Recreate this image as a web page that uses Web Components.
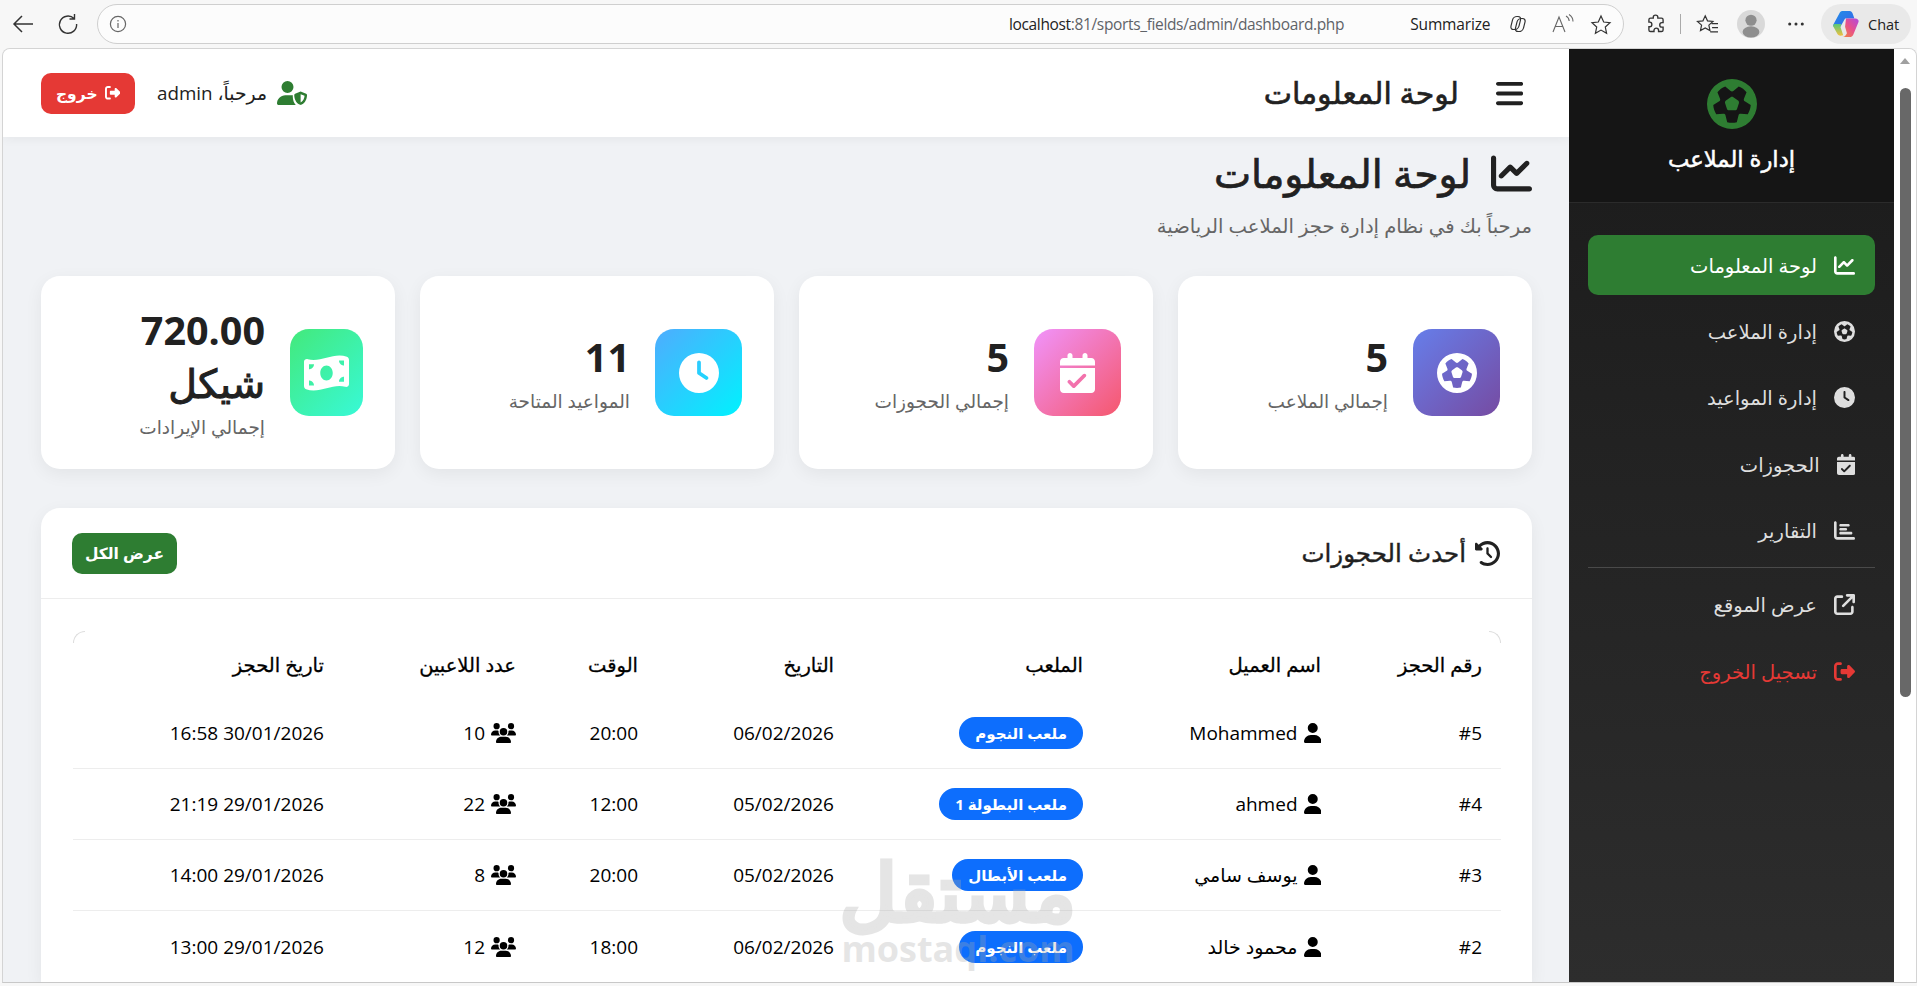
<!DOCTYPE html>
<html lang="ar" dir="rtl">
<head>
<meta charset="utf-8">
<title>لوحة المعلومات</title>
<style>
  html, body { margin: 0; height: 100%; overflow: hidden; background: #f7f7f7; }
  body {
    width: 1917px;
    height: 986px;
    font-family: "Open Sans", "DejaVu Sans", sans-serif;
    color: #212121;
    display: flex;
    flex-direction: column;
  }
  .frame {
    display: flex;
    height: 933px;
    margin-left: 2px;
    overflow: hidden;
    background: #f0f2f5;
    border-top: 1px solid #d4d4d4;
    border-left: 1px solid #d4d4d4;
    border-bottom: 1px solid #c8c8c8;
    border-right: 1px solid #d4d4d4;
    border-top-left-radius: 8px;
    border-top-right-radius: 8px;
    box-sizing: content-box;
    position: relative;
  }
</style>
</head>
<body>
  <browser-bar url-host="localhost" url-rest=":81/sports_fields/admin/dashboard.php"></browser-bar>
  <div class="frame">
    <fake-scrollbar></fake-scrollbar>
    <app-sidebar></app-sidebar>
    <dashboard-main></dashboard-main>
  </div>

<script>
// FontAwesome style glyphs used across the page
const ICONS = {
  chart: ['0 0 512 512', 'M64 64c0-17.7-14.3-32-32-32S0 46.3 0 64V400c0 44.2 35.8 80 80 80H480c17.7 0 32-14.3 32-32s-14.3-32-32-32H80c-8.8 0-16-7.2-16-16V64zm406.6 86.6c12.5-12.5 12.5-32.8 0-45.3s-32.8-12.5-45.3 0L320 210.7l-57.4-57.4c-12.5-12.5-32.8-12.5-45.3 0l-112 112c-12.5 12.5-12.5 32.8 0 45.3s32.8 12.5 45.3 0L240 221.3l57.4 57.4c12.5 12.5 32.8 12.5 45.3 0l128-128z'],
  futbol: ['0 0 512 512', 'M417.3 360.1l-71.6-4.8c-5.2-.3-10.3 1.1-14.5 4.2s-7.2 7.4-8.4 12.5l-17.6 69.6C289.5 445.8 273 448 256 448s-33.5-2.2-49.2-6.4L189.2 372c-1.3-5-4.3-9.4-8.4-12.5s-9.3-4.5-14.5-4.2l-71.6 4.8c-17.6-27.2-28.5-59.2-30.4-93.6L125 228.3c4.4-2.8 7.6-7 9.2-11.9s1.4-10.2-.5-15l-26.7-66.6C128 109.2 155.3 89 186.7 76.9l55.2 46c4 3.3 9 5.1 14.1 5.1s10.2-1.8 14.1-5.1l55.2-46c31.3 12.1 58.7 32.3 79.6 57.9l-26.7 66.6c-1.9 4.8-2.1 10.1-.5 15s4.9 9.1 9.2 11.9l60.7 38.2c-1.9 34.4-12.8 66.4-30.4 93.6zM256 512A256 256 0 1 0 256 0a256 256 0 1 0 0 512zm14.1-325.7c-8.4-6.1-19.8-6.1-28.2 0L194 221c-8.4 6.1-11.9 16.9-8.7 26.8l18.3 56.3c3.2 9.9 12.4 16.6 22.8 16.6h59.2c10.4 0 19.6-6.7 22.8-16.6l18.3-56.3c3.2-9.9-.3-20.7-8.7-26.8l-47.9-34.8z'],
  clock: ['0 0 512 512', 'M256 0a256 256 0 1 1 0 512A256 256 0 1 1 256 0zM232 120V256c0 8 4 15.5 10.7 20l96 64c11 7.4 25.9 4.4 33.3-6.7s4.4-25.9-6.7-33.3L280 243.2V120c0-13.3-10.7-24-24-24s-24 10.7-24 24z'],
  calendar: ['0 0 448 512', 'M128 0c17.7 0 32 14.3 32 32V64H288V32c0-17.7 14.3-32 32-32s32 14.3 32 32V64h48c26.5 0 48 21.5 48 48v48H0V112C0 85.5 21.5 64 48 64H96V32c0-17.7 14.3-32 32-32zM0 192H448V464c0 26.5-21.5 48-48 48H48c-26.5 0-48-21.5-48-48V192zM329 305c9.4-9.4 9.4-24.6 0-33.9s-24.6-9.4-33.9 0l-119 119L137 351c-9.4-9.4-24.6-9.4-33.9 0s-9.4 24.6 0 33.9l56 56c9.4 9.4 24.6 9.4 33.9 0L329 305z'],
  bars3: ['0 0 512 512', 'M32 32c17.7 0 32 14.3 32 32V400c0 8.8 7.2 16 16 16H480c17.7 0 32 14.3 32 32s-14.3 32-32 32H80c-44.2 0-80-35.8-80-80V64C0 46.3 14.3 32 32 32zm96 96c0-17.7 14.3-32 32-32l192 0c17.7 0 32 14.3 32 32s-14.3 32-32 32l-192 0c-17.7 0-32-14.3-32-32zm32 64H288c17.7 0 32 14.3 32 32s-14.3 32-32 32H160c-17.7 0-32-14.3-32-32s14.3-32 32-32zm0 96H416c17.7 0 32 14.3 32 32s-14.3 32-32 32H160c-17.7 0-32-14.3-32-32s14.3-32 32-32z'],
  external: ['0 0 512 512', 'M320 0c-17.7 0-32 14.3-32 32s14.3 32 32 32h82.7L201.4 265.4c-12.5 12.5-12.5 32.8 0 45.3s32.8 12.5 45.3 0L448 109.3V192c0 17.7 14.3 32 32 32s32-14.3 32-32V32c0-17.7-14.3-32-32-32H320zM80 32C35.8 32 0 67.8 0 112V432c0 44.2 35.8 80 80 80H400c44.2 0 80-35.8 80-80V320c0-17.7-14.3-32-32-32s-32 14.3-32 32V432c0 8.8-7.2 16-16 16H80c-8.8 0-16-7.2-16-16V112c0-8.8 7.2-16 16-16H192c17.7 0 32-14.3 32-32s-14.3-32-32-32H80z'],
  signout: ['0 0 512 512', 'M377.9 105.9L500.7 228.7c7.2 7.2 11.3 17.1 11.3 27.3s-4.1 20.1-11.3 27.3L377.9 406.1c-6.4 6.4-15 9.9-24 9.9c-18.7 0-33.9-15.2-33.9-33.9l0-62.1-128 0c-17.7 0-32-14.3-32-32l0-64c0-17.7 14.3-32 32-32l128 0 0-62.1c0-18.7 15.2-33.9 33.9-33.9c9 0 17.6 3.6 24 9.9zM160 96L96 96c-17.7 0-32 14.3-32 32l0 256c0 17.7 14.3 32 32 32l64 0c17.7 0 32 14.3 32 32s-14.3 32-32 32l-64 0c-53 0-96-43-96-96L0 128C0 75 43 32 96 32l64 0c17.7 0 32 14.3 32 32s-14.3 32-32 32z'],
  menu: ['0 0 448 512', 'M0 96C0 78.3 14.3 64 32 64H416c17.7 0 32 14.3 32 32s-14.3 32-32 32H32C14.3 128 0 113.7 0 96zM0 256c0-17.7 14.3-32 32-32H416c17.7 0 32 14.3 32 32s-14.3 32-32 32H32c-17.7 0-32-14.3-32-32zM448 416c0 17.7-14.3 32-32 32H32c-17.7 0-32-14.3-32-32s14.3-32 32-32H416c17.7 0 32 14.3 32 32z'],
  user: ['0 0 448 512', 'M224 256A128 128 0 1 0 224 0a128 128 0 1 0 0 256zm-45.7 48C79.8 304 0 383.8 0 482.3C0 498.7 13.3 512 29.7 512H418.3c16.4 0 29.7-13.3 29.7-29.7C448 383.8 368.2 304 269.7 304H178.3z'],
  users: ['0 0 640 512', 'M144 0a80 80 0 1 1 0 160A80 80 0 1 1 144 0zM512 0a80 80 0 1 1 0 160A80 80 0 1 1 512 0zM0 298.7C0 239.8 47.8 192 106.7 192h42.7c15.9 0 31 3.5 44.6 9.7c-1.3 7.2-1.9 14.7-1.9 22.3c0 38.2 16.8 72.5 43.3 96c-.2 0-.4 0-.7 0H21.3C9.6 320 0 310.4 0 298.7zM405.3 320c-.2 0-.4 0-.7 0c26.6-23.5 43.3-57.8 43.3-96c0-7.6-.7-15-1.9-22.3c13.6-6.3 28.7-9.7 44.6-9.7h42.7C592.2 192 640 239.8 640 298.7c0 11.8-9.6 21.3-21.3 21.3H405.3zM224 224a96 96 0 1 1 192 0 96 96 0 1 1 -192 0zM128 485.3C128 411.7 187.7 352 261.3 352H378.7C452.3 352 512 411.7 512 485.3c0 14.7-11.9 26.7-26.7 26.7H154.7c-14.7 0-26.7-11.9-26.7-26.7z'],
  admin: ['0 0 640 512', 'M224 256A128 128 0 1 0 224 0a128 128 0 1 0 0 256zm-45.7 48C79.8 304 0 383.8 0 482.3C0 498.7 13.3 512 29.7 512H400c-40-40-64-110-64-190c0-6 1-12 3-18H178.3zM504 224l118 47c11 4 18 14 18 26c0 64-26 170-124 212c-8 3-16 3-24 0C394 467 368 361 368 297c0-12 7-22 18-26l118-47zm0 60v176c52-26 80-90 84-145l-84-31z'],
  history: ['0 0 512 512', 'M75 75L41 41C25.9 25.9 0 36.6 0 57.9V168c0 13.3 10.7 24 24 24H134.1c21.4 0 32.1-25.9 17-41l-30.8-30.8C155 85.5 203 64 256 64c106 0 192 86 192 192s-86 192-192 192c-40.8 0-78.6-12.7-109.7-34.4c-14.5-10.1-34.4-6.6-44.6 7.9s-6.6 34.4 7.9 44.6C151.2 495 201.7 512 256 512c141.4 0 256-114.6 256-256S397.4 0 256 0C185.3 0 121.3 28.7 75 75zm181 53c-13.3 0-24 10.7-24 24V256c0 6.4 2.5 12.5 7 17l72 72c9.4 9.4 24.6 9.4 33.9 0s9.4-24.6 0-33.9l-65-65V152c0-13.3-10.7-24-24-24z'],
  money: ['0 0 576 512', 'M0 112.5V422.3c0 18 10.1 35 27 41.3c87 32.5 174 10.3 261-11.9c79.8-20.3 159.6-40.7 239.3-18.9c23 6.3 48.7-9.5 48.7-33.4V89.7c0-18-10.1-35-27-41.3C462 15.9 375 38.1 288 60.3C208.2 80.6 128.4 100.9 48.7 79.1C25.6 72.8 0 88.6 0 112.5zM288 352c-44.2 0-80-43-80-96s35.8-96 80-96s80 43 80 96s-35.8 96-80 96zM64 352c35.3 0 64 28.7 64 64H64V352zm64-208c0 35.3-28.7 64-64 64V144h64zM512 304v64H448c0-35.3 28.7-64 64-64zM448 96h64v64c-35.3 0-64-28.7-64-64z']
};

class FaIcon extends HTMLElement {
  connectedCallback() {
    const [box, d] = ICONS[this.getAttribute('name')];
    const w = box.split(' ')[2] / 512;
    this.attachShadow({ mode: 'open' }).innerHTML = `
      <style>
        :host { display: inline-flex; align-items: center; flex: none; line-height: 1; }
        svg { height: 1em; width: ${w}em; fill: currentColor; display: block; }
      </style>
      <svg viewBox="${box}"><path d="${d}"/></svg>`;
  }
}
customElements.define('fa-icon', FaIcon);

class BrowserBar extends HTMLElement {
  connectedCallback() {
    this.attachShadow({ mode: 'open' }).innerHTML = `
      <style>
        :host {
          display: flex; direction: ltr; align-items: center; flex: none; height: 48px;
          background: #f7f7f7; box-sizing: border-box; padding-left: 12px;
          font-family: "Open Sans", sans-serif; color: #222;
        }
        svg { display: block; flex: none; fill: none; stroke: #333; stroke-width: 1.4; }
        .address {
          width: 1527px; height: 40px; margin-left: 18px; box-sizing: border-box;
          border: 1px solid #cfcfcf; border-radius: 20px; background: #fcfcfc;
          display: flex; align-items: center; padding: 0 11px;
        }
        .url { margin-left: 882px; font-size: 15.5px; letter-spacing: -.35px; width: 372px; white-space: nowrap; color: #5f6368; }
        .url b { font-weight: 400; color: #222; }
        .sum { margin-left: 30px; font-size: 15.5px; letter-spacing: -.15px; color: #222; width: 84px; white-space: nowrap; }
        .chat {
          margin-left: 16px; width: 90px; height: 40px; border-radius: 20px; background: #e9e9e9;
          display: flex; align-items: center; padding-left: 11px; box-sizing: border-box; gap: 8px;
          font-size: 14.5px; white-space: nowrap;
        }
      </style>
      <svg width="22" height="20" viewBox="0 0 22 20" style="stroke-width:1.5"><path d="M21 10H2M10 2l-8 8 8 8"/></svg>
      <svg width="22" height="22" viewBox="0 0 22 22" style="margin-left:23px"><path d="M17 5.5A8.6 8.6 0 1 0 19.6 11M17.5 1v5h-5"/></svg>
      <div class="address">
        <svg width="18" height="18" viewBox="0 0 18 18" style="stroke:#666;stroke-width:1.2"><circle cx="9" cy="9" r="7.6"/><path d="M9 8v5M9 5v1.4"/></svg>
        <span class="url"><b>${this.getAttribute('url-host')}</b>${this.getAttribute('url-rest')}</span>
        <span class="sum">Summarize</span>
        <svg width="20" height="20" viewBox="0 0 20 20" style="margin-left:13px;stroke-width:1.2"><rect x="5.500" y="2.500" width="8" height="13" rx="3.500" transform="skewX(-14) translate(1.500 0)"/><rect x="9.500" y="4.500" width="8" height="13" rx="3.500" transform="skewX(-14) translate(2.500 0)"/></svg>
        <svg width="24" height="20" viewBox="0 0 24 20" style="margin-left:24px;stroke:#666;stroke-width:1.1"><path d="M2 18L8 3l6 15M4.500 12.500h7M15 2c2 1 3 2.500 3.200 5M18 0.500c2.500 1.500 4 4 4 7"/></svg>
        <svg width="22" height="21" viewBox="0 0 22 21" style="margin-left:15px;stroke-width:1.2"><path d="M11 2l2.700 6 6.300.700-4.700 4.300 1.300 6.300L11 16.100l-5.600 3.200 1.300-6.300L2 8.700 8.300 8z"/></svg>
      </div>
      <svg width="20" height="22" viewBox="0 0 22 24" style="margin-left:22px;stroke-width:1.500"><path d="M8 4.500c0-3 5-3 5 0v1h4c1 0 1.800.800 1.800 1.800v3.200h-1.300c-3.200 0-3.200 5 0 5h1.300v3c0 1-.800 1.800-1.800 1.800h-3.200v-1.300c0-3.200-5-3.200-5 0v1.300H5c-1 0-1.800-.800-1.800-1.800V15h1c3 0 3-5 0-5h-1V7.300c0-1 .800-1.800 1.800-1.800h3z"/></svg>
      <svg width="1" height="20" viewBox="0 0 1 20" style="margin-left:14px;stroke:#aaa;stroke-width:1"><path d="M.5 0v20"/></svg>
      <svg width="23" height="21" viewBox="0 0 25 23" style="margin-left:15px;stroke-width:1.300"><path d="M10 2l2.500 5.500 6 .7-4.500 4 1.200 6L10 15.200l-5.200 3 1.200-6-4.500-4 6-.7zM17 10.500h7M17.500 15h6.500M15.500 19.500h8.500"/></svg>
      <svg width="28" height="28" viewBox="0 0 30 30" style="margin-left:18px;stroke:none"><circle cx="15" cy="15" r="15" fill="#d9d9d9"/><circle cx="15" cy="11" r="6" fill="#8e8e8e"/><ellipse cx="15" cy="23.500" rx="9" ry="6" fill="#8e8e8e"/></svg>
      <svg width="18" height="4" viewBox="0 0 20 4" style="margin-left:22px;stroke:none;fill:#333"><circle cx="3" cy="2" r="1.700"/><circle cx="10" cy="2" r="1.700"/><circle cx="17" cy="2" r="1.700"/></svg>
      <div class="chat">
        <svg width="28" height="28" viewBox="0 0 30 30" style="stroke:none">
          <defs>
            <linearGradient id="c1" x1="0" y1="0" x2="1" y2="1"><stop offset="0" stop-color="#1f8fe8"/><stop offset="1" stop-color="#3a63e8"/></linearGradient>
            <linearGradient id="c2" x1="0" y1="1" x2="1" y2="0"><stop offset="0" stop-color="#f0883a"/><stop offset=".5" stop-color="#e8508c"/><stop offset="1" stop-color="#b04ae0"/></linearGradient>
            <linearGradient id="c3" x1="0" y1="0" x2="0" y2="1"><stop offset="0" stop-color="#58c878"/><stop offset="1" stop-color="#f0c040"/></linearGradient>
          </defs>
          <path d="M11 1h8c1.500 0 2.500 1 3 2.500L24 9H14l-5 9H3c-1.500 0-2-1.200-1.500-2.500L8 3.500C8.500 2 9.500 1 11 1z" fill="url(#c1)"/>
          <path d="M3 15h7l-1 3 3 9c-3 1-5 .5-6-1l-4.500-8c-.5-1 0-3 1.500-3z" fill="url(#c3)"/>
          <path d="M15 9h10c2 0 4 1.500 3.500 3.500L23 26c-.7 2-2 3-4 3h-8c3 0 4-2 5-4l-2-7z" fill="url(#c2)"/>
        </svg>
        <span>Chat</span>
      </div>`;
  }
}
customElements.define('browser-bar', BrowserBar);

class FakeScrollbar extends HTMLElement {
  connectedCallback() {
    this.attachShadow({ mode: 'open' }).innerHTML = `
      <style>
        :host { display: block; flex: none; width: 22px; background: #fff; position: relative; }
        .arrow { margin: 9px auto 0; width: 0; border: 5px solid transparent; border-top: 0; border-bottom: 6px solid #a0a0a0; }
        .thumb { width: 11px; height: 609px; margin: 24px 5px 0 6px; border-radius: 6px; background: #686868; }
      </style>
      <div class="arrow"></div>
      <div class="thumb"></div>`;
  }
}
customElements.define('fake-scrollbar', FakeScrollbar);

class NavItem extends HTMLElement {
  connectedCallback() {
    this.attachShadow({ mode: 'open' }).innerHTML = `
      <style>
        :host {
          display: flex; align-items: center; height: 60px; margin: 0 19px 6.4px; padding-right: 20px;
          box-sizing: border-box; border-radius: 10px; font-size: 19.5px; gap: 17px; color: #dedede; white-space: nowrap;
        }
        :host([active]) { background: #2e7d32; color: #fff; }
        :host([danger]) { color: #e53935; }
        fa-icon { font-size: 21px; }
      </style>
      <fa-icon name="${this.getAttribute('icon')}"></fa-icon>
      <slot></slot>`;
  }
}
customElements.define('nav-item', NavItem);

class AppSidebar extends HTMLElement {
  connectedCallback() {
    this.attachShadow({ mode: 'open' }).innerHTML = `
      <style>
        :host { display: flex; flex-direction: column; flex: none; width: 325px; background: linear-gradient(180deg, #1a1a1a, #2d2d2d); color: #fff; }
        .brand {
          height: 154px; box-sizing: border-box; padding-top: 30px; background: #151515;
          border-bottom: 1px solid #2b2b2b; display: flex; flex-direction: column; align-items: center;
        }
        .brand fa-icon { font-size: 50px; color: #2e7d32; }
        .brand h1 { margin: 14px 0 0; font-size: 22.7px; line-height: 32px; font-weight: 400; -webkit-text-stroke: .5px #fff; }
        nav { padding-top: 32px; }
        hr { border: 0; border-top: 1px solid #4a4a4a; margin: 0 19px 7px; }
      </style>
      <div class="brand">
        <fa-icon name="futbol"></fa-icon>
        <h1>إدارة الملاعب</h1>
      </div>
      <nav>
        <nav-item icon="chart" active>لوحة المعلومات</nav-item>
        <nav-item icon="futbol">إدارة الملاعب</nav-item>
        <nav-item icon="clock">إدارة المواعيد</nav-item>
        <nav-item icon="calendar">الحجوزات</nav-item>
        <nav-item icon="bars3">التقارير</nav-item>
        <hr>
        <nav-item icon="external">عرض الموقع</nav-item>
        <nav-item icon="signout" danger>تسجيل الخروج</nav-item>
      </nav>`;
  }
}
customElements.define('app-sidebar', AppSidebar);

class TopBar extends HTMLElement {
  connectedCallback() {
    this.attachShadow({ mode: 'open' }).innerHTML = `
      <style>
        :host {
          display: flex; align-items: center; flex: none; height: 88px; background: #fff;
          padding: 0 46px 0 38px; box-sizing: border-box; box-shadow: 0 2px 10px rgba(0,0,0,.05);
          position: relative;
        }
        .menu { font-size: 31px; color: #212121; }
        h2 { margin: 0 37px 0 0; font-size: 30px; font-weight: 400; -webkit-text-stroke: .6px #212121; line-height: 40px; }
        .side { margin-right: auto; display: flex; align-items: center; gap: 22px; }
        .hello { display: flex; align-items: center; gap: 10px; font-size: 18.8px; }
        .hello fa-icon { font-size: 24px; color: #2e7d32; }
        .out {
          display: flex; align-items: center; justify-content: center; gap: 7px; width: 94px; height: 41px;
          background: #e53935; color: #fff; border-radius: 10px; font-size: 15.5px; font-weight: 700;
        }
      </style>
      <fa-icon class="menu" name="menu"></fa-icon>
      <h2>لوحة المعلومات</h2>
      <div class="side">
        <div class="hello"><fa-icon name="admin"></fa-icon><span>مرحباً، admin</span></div>
        <div class="out"><fa-icon name="signout"></fa-icon><span>خروج</span></div>
      </div>`;
  }
}
customElements.define('top-bar', TopBar);

class StatCard extends HTMLElement {
  connectedCallback() {
    const picWidth = this.getAttribute('pic-width') || 87;
    this.attachShadow({ mode: 'open' }).innerHTML = `
      <style>
        :host {
          display: flex; align-items: center; gap: 25px; height: 193px; padding: 0 32px 0 20px;
          box-sizing: border-box; background: #fff; border-radius: 19px; box-shadow: 0 5px 18px rgba(0,0,0,.06);
        }
        .pic {
          width: ${picWidth}px; height: 87px; flex: none; border-radius: 19px; color: #fff; font-size: 40px;
          display: flex; align-items: center; justify-content: center;
          background: linear-gradient(135deg, ${this.getAttribute('from')}, ${this.getAttribute('to')});
        }
        .value { font-size: 39.5px; line-height: 53px; font-weight: 700; color: #212121; }
        .label { font-size: 18.5px; line-height: 28px; color: #666; margin-top: 3px; }
      </style>
      <div class="pic"><fa-icon name="${this.getAttribute('icon')}"></fa-icon></div>
      <div>
        <div class="value"><slot name="value"></slot></div>
        <div class="label"><slot name="label"></slot></div>
      </div>`;
  }
}
customElements.define('stat-card', StatCard);

const BOOKINGS = [
  ['#5', 'Mohammed', 'ملعب النجوم', '06/02/2026', '20:00', '10', '30/01/2026 16:58'],
  ['#4', 'ahmed', 'ملعب البطولة 1', '05/02/2026', '12:00', '22', '29/01/2026 21:19'],
  ['#3', 'يوسف سامي', 'ملعب الأبطال', '05/02/2026', '20:00', '8', '29/01/2026 14:00'],
  ['#2', 'محمود خالد', 'ملعب النجوم', '06/02/2026', '18:00', '12', '29/01/2026 13:00']
];

class BookingsCard extends HTMLElement {
  connectedCallback() {
    const rows = BOOKINGS.map(b => `
      <div class="row">
        <div>${b[0]}</div>
        <div class="with"><fa-icon name="user"></fa-icon><span>${b[1]}</span></div>
        <div><span class="badge">${b[2]}</span></div>
        <div>${b[3]}</div>
        <div>${b[4]}</div>
        <div class="with"><fa-icon name="users"></fa-icon><span>${b[5]}</span></div>
        <div>${b[6]}</div>
      </div>`).join('');
    this.attachShadow({ mode: 'open' }).innerHTML = `
      <style>
        :host { display: block; background: #fff; border-radius: 19px 19px 0 0; box-shadow: 0 5px 18px rgba(0,0,0,.06); margin-top: 39px; }
        header {
          height: 91px; box-sizing: border-box; display: flex; align-items: center; padding: 0 32px 0 31px;
          border-bottom: 1px solid #ededed; gap: 9px;
        }
        header fa-icon { font-size: 25px; color: #212121; }
        h3 { margin: 0; font-size: 24.5px; font-weight: 400; -webkit-text-stroke: .4px #212121; line-height: 32px; }
        .all {
          margin-right: auto; width: 105px; height: 41px; border-radius: 10px; background: #2e7d32; color: #fff;
          font-size: 15.5px; font-weight: 700; display: flex; align-items: center; justify-content: center;
        }
        .table { margin: 32px 31px 0 32px; position: relative; font-size: 19px; color: #000; }
        .table::before, .table::after {
          content: ""; position: absolute; top: 0; width: 12px; height: 12px; box-sizing: border-box; border-top: 1px solid #ddd;
        }
        .table::before { right: 0; border-right: 1px solid #ddd; border-top-right-radius: 12px; }
        .table::after { left: 0; border-left: 1px solid #ddd; border-top-left-radius: 12px; }
        .row {
          display: grid; grid-template-columns: 161px 238px 249px 196px 122px 192px 270px;
          height: 71px; align-items: center; border-bottom: 1px solid #ededed; box-sizing: border-box;
        }
        .row:last-child { border-bottom: 0; }
        .row.head { height: 67px; border-bottom: 0; font-size: 19.5px; -webkit-text-stroke: .3px #000; }
        .row > div { padding: 0 19px; }
        .with { display: flex; align-items: center; gap: 6px; }
        .with fa-icon { font-size: 20px; }
        .badge {
          display: inline-block; height: 32px; line-height: 32px; padding: 0 16px; border-radius: 16px;
          background: #0d6efd; color: #fff; font-size: 15px; font-weight: 700; white-space: nowrap;
        }
      </style>
      <header>
        <fa-icon name="history"></fa-icon>
        <h3>أحدث الحجوزات</h3>
        <div class="all">عرض الكل</div>
      </header>
      <div class="table">
        <div class="row head">
          <div>رقم الحجز</div><div>اسم العميل</div><div>الملعب</div><div>التاريخ</div><div>الوقت</div><div>عدد اللاعبين</div><div>تاريخ الحجز</div>
        </div>
        ${rows}
      </div>`;
  }
}
customElements.define('bookings-card', BookingsCard);

class DashboardMain extends HTMLElement {
  connectedCallback() {
    this.attachShadow({ mode: 'open' }).innerHTML = `
      <style>
        :host { display: flex; flex-direction: column; flex: 1; min-width: 0; position: relative; overflow: hidden; }
        .content { padding: 0 37px 0 38px; }
        h1 { margin: 0; display: flex; align-items: center; gap: 20px; height: 72px; font-size: 39.5px; font-weight: 400; -webkit-text-stroke: .7px #212121; color: #212121; }
        h1 fa-icon { font-size: 41px; -webkit-text-stroke: 0; }
        .sub { margin: 2px 0 0; font-size: 19.6px; line-height: 30px; color: #666; }
        .stats { display: grid; grid-template-columns: repeat(4, 354px); gap: 25px; margin-top: 35px; }
        .mark {
          position: absolute; left: 837px; top: 802px; width: 236px; text-align: center; color: #aaa; opacity: .3;
          direction: rtl; pointer-events: none;
        }
        .mark b { display: block; font-size: 79px; line-height: 80px; font-weight: 400; -webkit-text-stroke: 5px #aaa; }
        .mark i { display: block; font: 700 36px/36px "Open Sans", sans-serif; direction: ltr; }
      </style>
      <top-bar></top-bar>
      <div class="content">
        <h1><fa-icon name="chart"></fa-icon><span>لوحة المعلومات</span></h1>
        <p class="sub">مرحباً بك في نظام إدارة حجز الملاعب الرياضية</p>
        <div class="stats">
          <stat-card icon="futbol" from="#667eea" to="#764ba2"><span slot="value">5</span><span slot="label">إجمالي الملاعب</span></stat-card>
          <stat-card icon="calendar" from="#f093fb" to="#f5576c"><span slot="value">5</span><span slot="label">إجمالي الحجوزات</span></stat-card>
          <stat-card icon="clock" from="#4facfe" to="#00f2fe"><span slot="value">11</span><span slot="label">المواعيد المتاحة</span></stat-card>
          <stat-card icon="money" pic-width="73" from="#43e97b" to="#38f9d7"><span slot="value">720.00 <span style="font-weight:400;-webkit-text-stroke:1px #212121">شيكل</span></span><span slot="label">إجمالي الإيرادات</span></stat-card>
        </div>
        <bookings-card></bookings-card>
      </div>
      <div class="mark"><b>مستقل</b><i>mostaql.com</i></div>`;
  }
}
customElements.define('dashboard-main', DashboardMain);
</script>
</body>
</html>
